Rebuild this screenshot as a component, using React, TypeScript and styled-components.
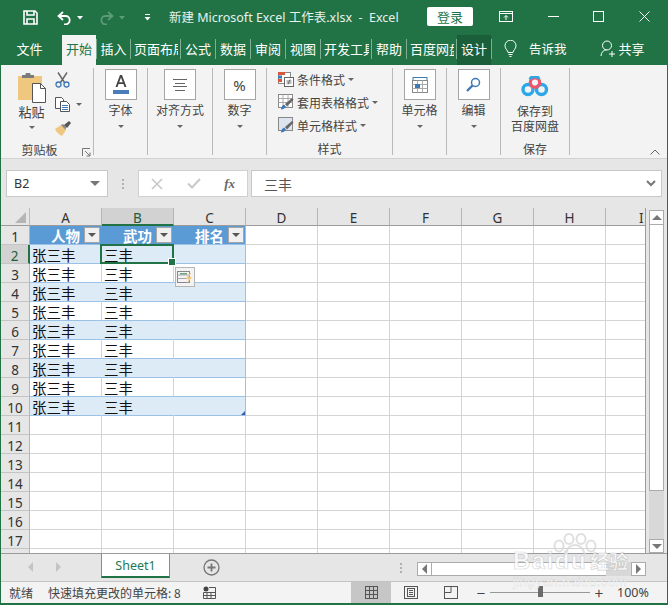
import React from 'react'
import styled, { createGlobalStyle } from 'styled-components'

const GREEN = '#217346'
const FONT = `"Noto Sans", "Noto Sans CJK SC", sans-serif`
const CJK = `"Noto Sans CJK SC", "Noto Sans", sans-serif`

const GlobalStyle = createGlobalStyle`
  html, body {
    margin: 0;
    padding: 0;
    background: #fff;
  }
  * {
    box-sizing: border-box;
  }
`

const Window = styled.div`
  position: relative;
  width: 668px;
  height: 605px;
  display: flex;
  flex-direction: column;
  overflow: hidden;
  background: #e6e6e6;
  border-left: 1px solid ${GREEN};
  border-right: 1px solid ${GREEN};
  border-bottom: 2px solid ${GREEN};
  font-family: ${CJK};
  color: #333;
`

const Spacer = styled.span<{ $w?: number; $h?: number }>`
  display: block;
  flex: none;
  width: ${(p) => p.$w ?? 0}px;
  height: ${(p) => p.$h ?? 0}px;
`

/* title bar */
const TitleBar = styled.div`
  height: 35px;
  flex: none;
  display: flex;
  align-items: center;
  padding-bottom: 2px;
  background: ${GREEN};
  color: #fff;
`

const QuickAccess = styled.div`
  width: 168px;
  flex: none;
  display: flex;
  align-items: center;
  gap: 5px;
  margin-top: 2px;
  padding-left: 22px;
`

const TitleText = styled.div`
  width: 258px;
  flex: none;
  font-family: ${FONT};
  font-size: 12.5px;
  white-space: pre;
  color: #e8f1ec;
`

const LoginButton = styled.div`
  width: 46px;
  height: 19px;
  flex: none;
  background: #fff;
  border-radius: 2px;
  color: ${GREEN};
  font-size: 13px;
  line-height: 19px;
  text-align: center;
`

const WindowButtons = styled.div`
  display: flex;
  align-items: center;
  margin-left: 26px;
  gap: 34.5px;
`

/* ribbon tabs */
const TabBar = styled.div`
  height: 30px;
  flex: none;
  display: flex;
  background: ${GREEN};
`

const Tab = styled.div<{ $w: number; $kind?: 'active' | 'dark' | 'plain' | 'file' }>`
  width: ${(p) => p.$w}px;
  flex: none;
  height: 30px;
  display: flex;
  align-items: center;
  justify-content: center;
  padding-bottom: 3px;
  padding-right: ${(p) => (p.$kind === 'file' ? 4 : 0)}px;
  overflow: hidden;
  white-space: nowrap;
  font-size: 13px;
  color: ${(p) => (p.$kind === 'active' ? GREEN : '#fff')};
  background: ${(p) => (p.$kind === 'active' ? '#f3f3f3' : p.$kind === 'dark' ? '#1b5e3a' : 'transparent')};
`

const TabClip = styled.div<{ $w: number }>`
  width: ${(p) => p.$w}px;
  flex: none;
  height: 30px;
  display: flex;
  align-items: center;
  padding: 0 0 3px 3px;
  overflow: hidden;
  clip-path: inset(0 2px 0 0);
  white-space: nowrap;
  font-size: 13px;
  color: #fff;
`

const TabSep = styled.div`
  width: 1px;
  flex: none;
  height: 20px;
  margin-top: 4px;
  background: #7fae95;
`

const TabExtra = styled.div<{ $ml: number; $gap: number; $size: number }>`
  display: flex;
  align-items: center;
  gap: ${(p) => p.$gap}px;
  margin-left: ${(p) => p.$ml}px;
  padding-bottom: 3px;
  font-size: ${(p) => p.$size}px;
  color: #fff;
  white-space: nowrap;
`

/* ribbon */
const Ribbon = styled.div`
  position: relative;
  height: 94px;
  flex: none;
  display: flex;
  background: #f3f3f3;
  border-bottom: 1px solid #d2d2d2;
  padding: 3px 0 3px;
`

const Group = styled.div<{ $w: number }>`
  width: ${(p) => p.$w}px;
  flex: none;
  display: flex;
  flex-direction: column;
  align-items: center;
  border-right: 1px solid #b9b9b9;
  font-size: 12px;
  color: #444;
`

const GroupBody = styled.div`
  flex: 1;
  display: flex;
  flex-direction: column;
  align-items: center;
  width: 100%;
`

const GroupLabel = styled.div<{ $pr?: number }>`
  height: 18px;
  padding-top: 3px;
  padding-right: ${(p) => p.$pr ?? 0}px;
  line-height: 17px;
  font-size: 12px;
  text-align: center;
  width: 100%;
  color: #444;
`

const IconBox = styled.div`
  width: 32px;
  height: 31px;
  margin-top: 1px;
  display: flex;
  align-items: center;
  justify-content: center;
  background: #fff;
  border: 1px solid #a5a5a5;
`

const PercentSign = styled.span`
  font-family: ${FONT};
  font-size: 15px;
  color: #444;
`

const BigLabel = styled.div`
  margin-top: 1px;
  line-height: 17px;
  font-size: 12px;
  white-space: nowrap;
`

const PasteLabel = styled.div`
  line-height: 17px;
  font-size: 13px;
  white-space: nowrap;
`

const SaveLabel = styled.div`
  margin-top: 5px;
  line-height: 15px;
  font-size: 12px;
  text-align: center;
  white-space: nowrap;
`

const Caret = styled.div<{ $mt?: number; $ml?: number }>`
  width: 0;
  height: 0;
  flex: none;
  margin-top: ${(p) => p.$mt ?? 0}px;
  margin-left: ${(p) => p.$ml ?? 0}px;
  border-left: 3px solid transparent;
  border-right: 3px solid transparent;
  border-top: 3px solid #666;
`

const ClipboardBody = styled.div`
  flex: 1;
  display: flex;
  width: 100%;
`

const PasteColumn = styled.div`
  width: 50px;
  display: flex;
  flex-direction: column;
  align-items: center;
  padding: 5px 0 0 11px;
`

const ClipTools = styled.div`
  display: flex;
  flex-direction: column;
  gap: 4px;
  padding: 2px 0 0 4px;
`

const ClipToolRow = styled.div`
  display: flex;
  align-items: center;
  height: 20px;
`

const LabelRow = styled.div`
  position: relative;
  width: 100%;
`

const Launcher = styled.svg`
  position: absolute;
  right: 2px;
  top: 10px;
`

const StyleList = styled.div`
  flex: 1;
  display: flex;
  flex-direction: column;
  width: 100%;
  padding: 1px 0 0 11px;
  gap: 3px;
`

const StyleRow = styled.div`
  display: flex;
  align-items: center;
  height: 20px;
  gap: 3px;
  font-size: 12px;
  white-space: nowrap;
`

const CollapseIcon = styled.svg`
  position: absolute;
  right: 7px;
  bottom: 3px;
`

/* formula bar */
const FormulaRow = styled.div`
  height: 49px;
  flex: none;
  display: flex;
  padding: 11px 5px 11px 5px;
`

const NameBox = styled.div`
  width: 102px;
  flex: none;
  display: flex;
  align-items: center;
  justify-content: space-between;
  padding: 0 7px;
  background: #fff;
  border: 1px solid #c8c8c8;
  font-family: ${FONT};
  font-size: 12.5px;
`

const FormulaDots = styled.div`
  width: 30px;
  flex: none;
  display: flex;
  flex-direction: column;
  align-items: center;
  justify-content: center;
  gap: 2px;
`

const Dot = styled.span`
  width: 2px;
  height: 2px;
  background: #b0b0b0;
`

const FormulaButtons = styled.div`
  width: 110px;
  flex: none;
  display: flex;
  align-items: center;
  justify-content: space-between;
  padding: 0 12px;
  background: #fff;
  border: 1px solid #d0d0d0;
`

const FxLabel = styled.span`
  font-family: "Liberation Serif", serif;
  font-style: italic;
  font-weight: 700;
  font-size: 13px;
  color: #666;
`

const FormulaInput = styled.div`
  flex: 1;
  margin-left: 3px;
  display: flex;
  align-items: center;
  justify-content: space-between;
  padding: 0 5px 0 12px;
  background: #fff;
  border: 1px solid #c8c8c8;
  font-size: 14px;
  color: #555;
`

/* sheet */
const SheetArea = styled.div`
  position: relative;
  height: 346px;
  flex: none;
  display: flex;
`

const Grid = styled.div`
  width: 645px;
  flex: none;
  display: grid;
  grid-template-columns: 29px repeat(8, 72px) 40px;
  grid-template-rows: 18px repeat(17, 19px) 5px;
  overflow: hidden;
  background: #fff;
  border-right: 1px solid #9b9b9b;
  border-bottom: 1px solid #9b9b9b;
`

const Corner = styled.div`
  position: relative;
  background: #e6e6e6;
  border-right: 1px solid #bcbcbc;
  border-bottom: 1px solid #9b9b9b;
`

const CornerMark = styled.div`
  position: absolute;
  right: 3px;
  bottom: 2px;
  width: 0;
  height: 0;
  border-left: 11px solid transparent;
  border-bottom: 11px solid #b5b5b5;
`

const ColHead = styled.div<{ $sel?: boolean; $last?: boolean }>`
  display: flex;
  align-items: center;
  justify-content: ${(p) => (p.$last ? 'flex-start' : 'center')};
  padding: 3px 0 0 ${(p) => (p.$last ? 33 : 0)}px;
  font-family: ${FONT};
  font-size: 13.5px;
  color: ${(p) => (p.$sel ? '#1e5d3b' : '#333')};
  background: ${(p) => (p.$sel ? '#d2d2d2' : '#e6e6e6')};
  border-right: ${(p) => (p.$last ? 'none' : '1px solid #b5b5b5')};
  border-bottom: ${(p) => (p.$sel ? `2px solid ${GREEN}` : '1px solid #9b9b9b')};
`

const RowHead = styled.div<{ $sel?: boolean }>`
  display: flex;
  align-items: center;
  justify-content: center;
  padding-top: 3px;
  font-family: ${FONT};
  font-size: 13.5px;
  line-height: 14px;
  color: ${(p) => (p.$sel ? '#1e5d3b' : '#333')};
  background: ${(p) => (p.$sel ? '#d2d2d2' : '#e6e6e6')};
  border-right: ${(p) => (p.$sel ? `2px solid ${GREEN}` : '1px solid #b5b5b5')};
  border-bottom: 1px solid #c4c4c4;
`

const Cell = styled.div<{ $zone?: 'head' | 'stripe' | 'plain'; $edge?: boolean }>`
  position: relative;
  display: flex;
  align-items: center;
  padding: 2px 0 0 2px;
  font-size: 14.5px;
  line-height: 16px;
  color: #111;
  white-space: nowrap;
  background: ${(p) => (p.$zone === 'head' ? '#5b9bd5' : p.$zone === 'stripe' ? '#ddebf7' : '#fff')};
  border-bottom: 1px solid ${(p) => (p.$zone ? '#9bc2e6' : '#d4d4d4')};
  border-right: 1px solid ${(p) =>
    p.$edge ? '#9bc2e6' : p.$zone === 'head' || p.$zone === 'stripe' ? 'transparent' : '#d4d4d4'};
`

const HeadText = styled.span`
  flex: 1;
  padding-right: 4px;
  text-align: right;
  color: #fff;
  font-weight: 700;
  font-size: 14.5px;
`

const FilterButton = styled.div`
  width: 16px;
  height: 16px;
  flex: none;
  margin: -2px 1px 0 0;
  display: flex;
  align-items: center;
  justify-content: center;
  background: #f0f0f0;
  border: 1px solid #a6a6a6;
`

const FilterCaret = styled.div`
  width: 0;
  height: 0;
  border-left: 4px solid transparent;
  border-right: 4px solid transparent;
  border-top: 4px solid #555;
`

const ActiveBorder = styled.div`
  position: absolute;
  inset: -1px -1px -1px -2px;
  border: 2px solid ${GREEN};
  pointer-events: none;
`

const FillHandle = styled.div`
  position: absolute;
  right: -4px;
  bottom: -4px;
  width: 6px;
  height: 6px;
  background: ${GREEN};
  border: 1px solid #fff;
  box-sizing: content-box;
  z-index: 2;
`

const SmartTag = styled.div`
  position: absolute;
  left: 174px;
  top: 59px;
  width: 20px;
  height: 20px;
  display: flex;
  align-items: center;
  justify-content: center;
  background: #f3f3f3;
  border: 1px solid #b5b5b5;
  z-index: 3;
`

const ResizeMark = styled.div`
  position: absolute;
  right: 0;
  bottom: 0;
  width: 0;
  height: 0;
  border-left: 4px solid transparent;
  border-bottom: 4px solid #2f5fa8;
`

const VScroll = styled.div`
  width: 21px;
  flex: none;
  display: flex;
  flex-direction: column;
  padding: 2px 3px 0 3px;
  border-bottom: 1px solid #9b9b9b;
`

const ScrollButton = styled.div<{ $h?: number }>`
  width: 15px;
  height: ${(p) => p.$h ?? 15}px;
  flex: none;
  display: flex;
  align-items: center;
  justify-content: center;
  background: #fff;
  border: 1px solid #ababab;
`

const VThumb = styled.div`
  width: 15px;
  height: 266px;
  flex: none;
  background: #fff;
  border: 1px solid #ababab;
  border-top: none;
`

const VTrack = styled.div`
  width: 15px;
  flex: 1;
  background: #d8d8d8;
`

/* sheet tabs */
const SheetTabs = styled.div`
  height: 28px;
  flex: none;
  display: flex;
  align-items: flex-start;
  background: #e6e6e6;
  border-bottom: 1px solid #c4c4c4;
`

const TabNav = styled.div`
  width: 100px;
  height: 22px;
  flex: none;
  display: flex;
  align-items: center;
  gap: 18px;
  padding: 3px 0 0 25px;
`

const SheetTab = styled.div`
  width: 69px;
  height: 24px;
  flex: none;
  display: flex;
  align-items: center;
  justify-content: center;
  background: #fff;
  border-left: 1px solid #8c8c8c;
  border-right: 1px solid #8c8c8c;
  border-bottom: 2px solid ${GREEN};
  font-family: ${FONT};
  font-size: 12.5px;
  color: #1d7a52;
`

const AddSheet = styled.svg`
  margin: 5px 0 0 33px;
  flex: none;
`

const TabDots = styled.div`
  margin: 9px 0 0 175px;
  display: flex;
  flex-direction: column;
  align-items: center;
  gap: 2px;
  width: 12px;
`

const HScroll = styled.div`
  display: flex;
  margin: 8px 0 0 10px;
  height: 14px;
  width: 229px;
  flex: none;
`

const HThumb = styled.div`
  width: 174px;
  flex: none;
  background: #fff;
  border-top: 1px solid #ababab;
  border-bottom: 1px solid #ababab;
`

const HTrack = styled.div`
  flex: 1;
  background: #d8d8d8;
`

/* status bar */
const StatusBar = styled.div`
  flex: 1;
  display: flex;
  align-items: center;
  background: #f3f3f3;
  font-size: 12px;
  color: #444;
`

const StatusText = styled.span<{ $w: number; $pl?: number }>`
  width: ${(p) => p.$w}px;
  padding-left: ${(p) => p.$pl ?? 0}px;
  flex: none;
  white-space: nowrap;
`

const ViewButton = styled.div<{ $on?: boolean }>`
  width: 40px;
  height: 100%;
  flex: none;
  display: flex;
  align-items: center;
  justify-content: center;
  background: ${(p) => (p.$on ? '#c6c6c6' : 'transparent')};
`

const ZoomSlider = styled.div`
  position: relative;
  width: 100px;
  height: 1px;
  flex: none;
  margin: 0 4px;
  background: #999;
`

const SliderKnob = styled.div`
  position: absolute;
  left: 48px;
  top: -6px;
  width: 5px;
  height: 11px;
  background: #6b6b6b;
`

const ZoomSign = styled.span`
  width: 10px;
  flex: none;
  font-size: 15px;
  line-height: 15px;
  color: #444;
  text-align: center;
`

const ZoomValue = styled.span`
  margin-left: 13px;
  font-family: ${FONT};
  font-size: 12.5px;
  white-space: nowrap;
`

/* watermark */
const Watermark = styled.div`
  position: absolute;
  left: 512px;
  top: 533px;
  width: 124px;
  height: 62px;
  display: flex;
  flex-direction: column;
  align-items: flex-start;
  color: rgba(255, 255, 255, 0.82);
  pointer-events: none;
  z-index: 5;
`

const WatermarkPaw = styled.svg`
  position: absolute;
  left: 38px;
  top: 0;
`

const WatermarkLine = styled.div`
  margin-top: 16px;
  display: flex;
  align-items: baseline;
  gap: 3px;
  font-family: "Liberation Sans", sans-serif;
  font-weight: 700;
  font-size: 24px;
  line-height: 24px;
  letter-spacing: 1.5px;
  -webkit-text-stroke: 0.6px rgba(170, 170, 170, 0.55);
`

const WatermarkCn = styled.span`
  font-family: ${CJK};
  font-size: 19px;
  letter-spacing: 0;
`

const WatermarkUrl = styled.div`
  margin-top: 2px;
  font-family: "Liberation Sans", sans-serif;
  font-size: 13.5px;
  line-height: 14px;
  letter-spacing: 0.3px;
  -webkit-text-stroke: 0.3px rgba(170, 170, 170, 0.5);
`

const SaveIcon = () => (
  <svg width="15" height="15" viewBox="0 0 15 15" fill="none" stroke="#fff" strokeWidth="1.6">
    <path d="M1 1h11l2 2v11H1z" />
    <path d="M4 1v4h7V1M4 14V9h7v5" />
  </svg>
)

const UndoPath = styled.svg<{ $flip?: boolean }>`
  transform: ${(p) => (p.$flip ? 'scaleX(-1)' : 'none')};
`

const UndoIcon = ({ muted, flip }: { muted?: boolean; flip?: boolean }) => (
  <UndoPath
    $flip={flip}
    width="15"
    height="14"
    viewBox="0 0 15 14"
    fill="none"
    stroke={muted ? '#5c9a78' : '#fff'}
    strokeWidth="1.8"
  >
    <path d="M6 1L1.5 5 6 9" />
    <path d="M2 5h6.5a4.2 4.2 0 0 1 0 8.4H7" />
  </UndoPath>
)

const TinyCaret = ({ color = '#fff' }: { color?: string }) => (
  <svg width="6" height="4" viewBox="0 0 6 4">
    <path d="M0 0h6L3 3.5z" fill={color} />
  </svg>
)

const CustomizeIcon = () => (
  <svg width="7" height="8" viewBox="0 0 7 8">
    <path d="M1 0.5h5" stroke="#fff" />
    <path d="M0.5 3h6L3.5 6.5z" fill="#fff" />
  </svg>
)

const RibbonDisplayIcon = () => (
  <svg width="14" height="11" viewBox="0 0 14 11" fill="none" stroke="#fff">
    <rect x="0.5" y="0.5" width="13" height="10" />
    <path d="M0.5 2.5h13M7 9V4.5M5 6.5l2-2 2 2" />
  </svg>
)

const MinIcon = () => (
  <svg width="11" height="11" viewBox="0 0 11 11" stroke="#fff">
    <path d="M0 5.5h11" />
  </svg>
)

const MaxIcon = () => (
  <svg width="11" height="11" viewBox="0 0 11 11" fill="none" stroke="#fff">
    <rect x="0.5" y="0.5" width="10" height="10" />
  </svg>
)

const CloseIcon = () => (
  <svg width="11" height="11" viewBox="0 0 11 11" stroke="#fff">
    <path d="M0.5 0.5l10 10M10.5 0.5l-10 10" />
  </svg>
)

const BulbIcon = () => (
  <svg width="13" height="18" viewBox="0 0 13 18" fill="none" stroke="#fff">
    <path d="M4 12.5c0-2-3-3.5-3-6.8a5.5 5.5 0 0 1 11 0c0 3.3-3 4.8-3 6.8z" />
    <path d="M4.5 14.5h4M5.5 16.5h2" />
  </svg>
)

const ShareIcon = () => (
  <svg width="15" height="17" viewBox="0 0 15 17" fill="none" stroke="#fff">
    <circle cx="7" cy="5.5" r="4.5" />
    <path d="M1 16c0-3.5 2.5-6 5.5-6.2M9 14h6M12 11v6" />
  </svg>
)

const PasteIcon = () => (
  <svg width="28" height="30" viewBox="0 0 28 30">
    <path d="M0 3h5v2h10V3h9v24H0z" fill="#f0c77f" />
    <rect x="4" y="2" width="12" height="3" fill="#7b7b7b" />
    <rect x="7.5" y="0" width="5" height="3" rx="1" fill="#7b7b7b" />
    <path d="M14.5 10.5h8l5 5v14h-13z" fill="#fff" stroke="#555" />
    <path d="M22.5 10.5v5h5" fill="none" stroke="#555" />
  </svg>
)

const ScissorsIcon = () => (
  <svg width="15" height="16" viewBox="0 0 15 16" fill="none">
    <path d="M3 0.5l6.5 10M12 0.5l-6.5 10" stroke="#666" strokeWidth="1.4" />
    <circle cx="3.5" cy="12.5" r="2.5" stroke="#3f78b4" strokeWidth="1.3" />
    <circle cx="11.5" cy="12.5" r="2.5" stroke="#3f78b4" strokeWidth="1.3" />
  </svg>
)

const CopyIcon = () => (
  <svg width="15" height="15" viewBox="0 0 15 15" fill="#fff" stroke="#555">
    <path d="M0.5 0.5h6l2 2v9h-8z" />
    <path d="M5.5 4.5h6l3 3v7h-9z" />
    <path d="M7 8.5h6M7 10.5h6M7 12.5h6" stroke="#3f78b4" />
  </svg>
)

const BrushIcon = () => (
  <svg width="16" height="15" viewBox="0 0 16 15">
    <path d="M0 8l6-4 5 5-4 6C5 14 1 11 0 8z" fill="#f0c77f" />
    <path d="M6 4l2-1 3 3-0.5 3z" fill="#888" />
    <path d="M9 4l5-4 2 2-4 5z" fill="#555" />
  </svg>
)

const LauncherIcon = () => (
  <Launcher width="9" height="9" viewBox="0 0 9 9" fill="none" stroke="#777">
    <path d="M0.5 8V0.5H8" />
    <path d="M3 3l5 5M8 4.5V8H4.5" />
  </Launcher>
)

const FontIcon = () => (
  <svg width="18" height="22" viewBox="0 0 18 22">
    <path d="M3.5 13L8 1h2l4.5 12h-2l-1.1-3H6.6l-1.1 3zM7.2 8.3h3.6L9 3.5z" fill="#444" />
    <rect x="1" y="16" width="16" height="4" fill="#4a7ebb" />
  </svg>
)

const AlignIcon = () => (
  <svg width="16" height="12" viewBox="0 0 16 12" stroke="#666">
    <path d="M1 0.5h14M3 4.5h10M1 7.5h14M3 11.5h10" />
  </svg>
)

const CellsIcon = () => (
  <svg width="16" height="16" viewBox="0 0 16 16" fill="none">
    <path d="M1 0.5h14M1 0V3M15 0V3" stroke="#3f78b4" />
    <rect x="0.5" y="3.5" width="15" height="12" fill="#fff" stroke="#888" />
    <path d="M0.5 7.5h15M0.5 11.5h15M5.5 3.5v12M10.5 3.5v12" stroke="#aaa" />
    <rect x="3" y="7" width="5" height="4" fill="#3f78b4" />
  </svg>
)

const SearchIcon = () => (
  <svg width="15" height="15" viewBox="0 0 15 15" fill="none">
    <circle cx="9.5" cy="5.5" r="4" stroke="#3f78b4" strokeWidth="1.5" />
    <path d="M6.5 8.5L1 14" stroke="#3f78b4" strokeWidth="2.4" />
  </svg>
)

const BaiduCloudIcon = () => (
  <svg width="28" height="22" viewBox="0 0 28 22" fill="none">
    <circle cx="7" cy="13.5" r="5" stroke="#2da7e8" strokeWidth="3.4" />
    <circle cx="20.5" cy="13.5" r="5" stroke="#2da7e8" strokeWidth="3.4" />
    <circle cx="14" cy="6.5" r="4.7" stroke="#f0566a" strokeWidth="3.2" />
    <path d="M9 3.5a5 5 0 0 1 9-0.5" stroke="#2da7e8" strokeWidth="3.2" />
  </svg>
)

const CondFormatIcon = () => (
  <svg width="16" height="15" viewBox="0 0 16 15" fill="none">
    <rect x="0.5" y="0.5" width="12" height="11" fill="#fff" stroke="#888" />
    <rect x="0" y="0" width="7" height="3" fill="#d9583b" />
    <rect x="0" y="3.5" width="4" height="3" fill="#3f78b4" />
    <rect x="0" y="7" width="4" height="3" fill="#d9583b" />
    <rect x="6.5" y="5.5" width="9" height="9" fill="#fff" stroke="#666" />
    <path d="M8.5 9h5M8.5 11h5M12 7.5l-2 5" stroke="#555" strokeWidth="0.8" />
  </svg>
)

const TableFormatIcon = ({ plain }: { plain?: boolean }) => (
  <svg width="16" height="16" viewBox="0 0 16 16" fill="none">
    <rect x="0.5" y="0.5" width="14" height="13" fill={plain ? '#dde4ee' : '#fff'} stroke="#888" />
    {!plain && <path d="M0.5 4.5h14M0.5 8.5h14M5 0.5v13M10 0.5v13" stroke="#aaa" />}
    <path d="M3 15.5c2 0 4-1 5-3l-2-2c-2 1-3 3-3 5z" fill="#3f78b4" />
    <path d="M7 10l7-6 1.5 1.5-6.5 7z" fill="#666" />
  </svg>
)

const CrossIcon = () => (
  <svg width="12" height="12" viewBox="0 0 12 12" stroke="#c8c8c8" strokeWidth="1.6">
    <path d="M1 1l10 10M11 1L1 11" />
  </svg>
)

const CheckIcon = () => (
  <svg width="14" height="11" viewBox="0 0 14 11" fill="none" stroke="#c8c8c8" strokeWidth="2">
    <path d="M1 5.5L5 9.5 13 1" />
  </svg>
)

const ChevronDown = () => (
  <svg width="10" height="7" viewBox="0 0 10 7" fill="none" stroke="#777" strokeWidth="2">
    <path d="M1 1l4 4 4-4" />
  </svg>
)

const SmartTagIcon = () => (
  <svg width="17" height="15" viewBox="0 0 17 15" fill="none">
    <rect x="0.5" y="1.5" width="12" height="11" stroke="#888" />
    <path d="M0.5 5h12M0.5 8.5h12" stroke="#aaa" />
    <rect x="3" y="3" width="7" height="1.5" fill="#6fa287" />
    <path d="M13 3l-4 6h2.5l-1.5 5 5-7h-3l2-4z" fill="#f0c77f" />
  </svg>
)

const MacroIcon = () => (
  <svg width="13" height="13" viewBox="0 0 13 13">
    <circle cx="3" cy="3" r="2.5" fill="#444" />
    <path d="M6 1.5h6.5v11H0.5V6.5h12M0.5 9.5h12M4 6.5v6M8 6.500v6" fill="none" stroke="#555" />
  </svg>
)

const NormalViewIcon = () => (
  <svg width="13" height="13" viewBox="0 0 13 13" fill="none" stroke="#555">
    <rect x="0.5" y="0.5" width="12" height="12" />
    <path d="M0.5 4.5h12M0.5 8.5h12M4.5 0.5v12M8.5 0.5v12" />
  </svg>
)

const PageViewIcon = () => (
  <svg width="14" height="13" viewBox="0 0 14 13" fill="none" stroke="#555">
    <rect x="0.5" y="0.5" width="13" height="12" />
    <rect x="3.5" y="2.5" width="7" height="8" />
    <path d="M5 4.5h4M5 6.5h4M5 8.5h4" />
  </svg>
)

const BreakViewIcon = () => (
  <svg width="14" height="13" viewBox="0 0 14 13" fill="none" stroke="#555">
    <rect x="0.5" y="0.5" width="13" height="12" />
    <path d="M0.5 6.5h6.5v-6" />
  </svg>
)

const Arrow = ({ dir, color = '#777' }: { dir: 'up' | 'down' | 'left' | 'right'; color?: string }) => {
  const d = {
    up: 'M0 6L5 1l5 5z',
    down: 'M0 1h10L5 6z',
    left: 'M7 0v10L2 5z',
    right: 'M2 0v10L7 5z',
  }[dir]
  const vertical = dir === 'up' || dir === 'down'
  return (
    <svg width="10" height={vertical ? 7 : 10} viewBox={vertical ? '0 0 10 7' : '0 0 10 10'}>
      <path d={d} fill={color} />
    </svg>
  )
}

const AddIcon = () => (
  <AddSheet width="17" height="17" viewBox="0 0 17 17" fill="none" stroke="#777">
    <circle cx="8.5" cy="8.5" r="7.5" strokeWidth="1.3" />
    <path d="M4.5 8.5h8M8.5 4.5v8" strokeWidth="1.8" />
  </AddSheet>
)

const PawIcon = () => (
  <WatermarkPaw width="48" height="22" viewBox="0 0 48 22" fill="none" stroke="rgba(215,215,215,0.8)" strokeWidth="2">
    <ellipse cx="8" cy="13" rx="4.5" ry="5.5" />
    <ellipse cx="18" cy="6" rx="4.5" ry="5" />
    <ellipse cx="30" cy="6" rx="4.5" ry="5" />
    <ellipse cx="40" cy="13" rx="4.5" ry="5.5" />
    <path d="M24 12c-5 0-9 4-10 10M24 12c5 0 9 4 10 10" />
  </WatermarkPaw>
)

const COLUMNS = ['A', 'B', 'C', 'D', 'E', 'F', 'G', 'H', 'I']
const ROWS = Array.from({ length: 18 }, (_, i) => i + 1)
const HEADERS = ['人物', '武功', '排名']

const tabs: Array<[string, number, 'active' | 'dark' | 'plain' | 'clip']> = [
  ['开始', 34, 'active'],
  ['插入', 33, 'plain'],
  ['页面布局', 49, 'clip'],
  ['公式', 34, 'plain'],
  ['数据', 34, 'plain'],
  ['审阅', 34, 'plain'],
  ['视图', 34, 'plain'],
  ['开发工具', 50, 'clip'],
  ['帮助', 34, 'plain'],
  ['百度网盘', 49, 'clip'],
  ['设计', 34, 'dark'],
]

const SheetCell = ({ row, col }: { row: number; col: number }) => {
  const inTable = col < 3 && row <= 10
  const zone = !inTable ? undefined : row === 1 ? 'head' : row % 2 === 0 ? 'stripe' : 'plain'
  const active = row === 2 && col === 1

  return (
    <Cell $zone={zone} $edge={inTable && col === 2}>
      {row === 1 && col < 3 && (
        <>
          <HeadText>{HEADERS[col]}</HeadText>
          <FilterButton>
            <FilterCaret />
          </FilterButton>
        </>
      )}
      {row > 1 && row <= 10 && col === 0 && '张三丰'}
      {row > 1 && row <= 10 && col === 1 && '三丰'}
      {active && (
        <ActiveBorder>
          <FillHandle />
        </ActiveBorder>
      )}
      {row === 10 && col === 2 && <ResizeMark />}
    </Cell>
  )
}

export default function App() {
  return (
    <>
      <GlobalStyle />
      <Window>
        <TitleBar>
          <QuickAccess>
            <SaveIcon />
            <Spacer $w={9} />
            <UndoIcon />
            <TinyCaret />
            <Spacer $w={6} />
            <UndoIcon muted flip />
            <TinyCaret color="#5c9a78" />
            <Spacer $w={9} />
            <CustomizeIcon />
          </QuickAccess>
          <TitleText>{'新建 Microsoft Excel 工作表.xlsx  -  Excel'}</TitleText>
          <LoginButton>登录</LoginButton>
          <WindowButtons>
            <RibbonDisplayIcon />
            <MinIcon />
            <MaxIcon />
            <CloseIcon />
          </WindowButtons>
        </TitleBar>

        <TabBar>
          <Tab $w={61} $kind="file">
            文件
          </Tab>
          {tabs.map(([label, w, kind]) => (
            <React.Fragment key={label}>
              {kind === 'clip' ? (
                <TabClip $w={w}>{label}</TabClip>
              ) : (
                <Tab $w={w} $kind={kind}>
                  {label}
                </Tab>
              )}
              <TabSep />
            </React.Fragment>
          ))}
          <TabExtra $ml={12} $gap={12} $size={12.5}>
            <BulbIcon />
            告诉我
          </TabExtra>
          <TabExtra $ml={33} $gap={4} $size={13}>
            <ShareIcon />
            共享
          </TabExtra>
        </TabBar>

        <Ribbon>
          <Group $w={93}>
            <ClipboardBody>
              <PasteColumn>
                <PasteIcon />
                <PasteLabel>粘贴</PasteLabel>
                <Caret $mt={6} />
              </PasteColumn>
              <ClipTools>
                <ClipToolRow>
                  <ScissorsIcon />
                </ClipToolRow>
                <ClipToolRow>
                  <CopyIcon />
                  <Caret $ml={6} />
                </ClipToolRow>
                <ClipToolRow>
                  <BrushIcon />
                </ClipToolRow>
              </ClipTools>
            </ClipboardBody>
            <LabelRow>
              <GroupLabel $pr={15}>剪贴板</GroupLabel>
              <LauncherIcon />
            </LabelRow>
          </Group>

          <Group $w={54}>
            <GroupBody>
              <IconBox>
                <FontIcon />
              </IconBox>
              <BigLabel>字体</BigLabel>
              <Caret $mt={7} />
            </GroupBody>
          </Group>

          <Group $w={65}>
            <GroupBody>
              <IconBox>
                <AlignIcon />
              </IconBox>
              <BigLabel>对齐方式</BigLabel>
              <Caret $mt={7} />
            </GroupBody>
          </Group>

          <Group $w={54}>
            <GroupBody>
              <IconBox>
                <PercentSign>%</PercentSign>
              </IconBox>
              <BigLabel>数字</BigLabel>
              <Caret $mt={7} />
            </GroupBody>
          </Group>

          <Group $w={126}>
            <StyleList>
              <StyleRow>
                <CondFormatIcon />
                条件格式
                <Caret />
              </StyleRow>
              <StyleRow>
                <TableFormatIcon />
                套用表格格式
                <Caret />
              </StyleRow>
              <StyleRow>
                <TableFormatIcon plain />
                单元格样式
                <Caret />
              </StyleRow>
            </StyleList>
            <GroupLabel>样式</GroupLabel>
          </Group>

          <Group $w={54}>
            <GroupBody>
              <IconBox>
                <CellsIcon />
              </IconBox>
              <BigLabel>单元格</BigLabel>
              <Caret $mt={7} />
            </GroupBody>
          </Group>

          <Group $w={54}>
            <GroupBody>
              <IconBox>
                <SearchIcon />
              </IconBox>
              <BigLabel>编辑</BigLabel>
              <Caret $mt={7} />
            </GroupBody>
          </Group>

          <Group $w={69}>
            <GroupBody>
              <Spacer $h={8} />
              <BaiduCloudIcon />
              <SaveLabel>
                保存到
                <br />
                百度网盘
              </SaveLabel>
            </GroupBody>
            <GroupLabel>保存</GroupLabel>
          </Group>

          <CollapseIcon width="10" height="6" viewBox="0 0 10 6" fill="none" stroke="#666">
            <path d="M0.5 5.5L5 1l4.5 4.5" />
          </CollapseIcon>
        </Ribbon>

        <FormulaRow>
          <NameBox>
            B2
            <Arrow dir="down" />
          </NameBox>
          <FormulaDots>
            <Dot />
            <Dot />
            <Dot />
          </FormulaDots>
          <FormulaButtons>
            <CrossIcon />
            <CheckIcon />
            <FxLabel>fx</FxLabel>
          </FormulaButtons>
          <FormulaInput>
            三丰
            <ChevronDown />
          </FormulaInput>
        </FormulaRow>

        <SheetArea>
          <Grid>
            <Corner>
              <CornerMark />
            </Corner>
            {COLUMNS.map((c) => (
              <ColHead key={c} $sel={c === 'B'} $last={c === 'I'}>
                {c}
              </ColHead>
            ))}
            {ROWS.map((row) => (
              <React.Fragment key={row}>
                <RowHead $sel={row === 2}>{row < 18 ? row : ''}</RowHead>
                {COLUMNS.map((c, col) => (
                  <SheetCell key={c} row={row} col={col} />
                ))}
              </React.Fragment>
            ))}
          </Grid>
          <VScroll>
            <ScrollButton>
              <Arrow dir="up" />
            </ScrollButton>
            <VThumb />
            <VTrack />
            <ScrollButton $h={14}>
              <Arrow dir="down" />
            </ScrollButton>
          </VScroll>
          <SmartTag>
            <SmartTagIcon />
          </SmartTag>
        </SheetArea>

        <SheetTabs>
          <TabNav>
            <Arrow dir="left" color="#c4c4c4" />
            <Arrow dir="right" color="#c4c4c4" />
          </TabNav>
          <SheetTab>Sheet1</SheetTab>
          <AddIcon />
          <TabDots>
            <Dot />
            <Dot />
            <Dot />
          </TabDots>
          <HScroll>
            <ScrollButton $h={14}>
              <Arrow dir="left" />
            </ScrollButton>
            <HThumb />
            <HTrack />
            <ScrollButton $h={14}>
              <Arrow dir="right" />
            </ScrollButton>
          </HScroll>
        </SheetTabs>

        <StatusBar>
          <StatusText $w={47} $pl={8}>
            就绪
          </StatusText>
          <StatusText $w={155}>快速填充更改的单元格: 8</StatusText>
          <MacroIcon />
          <Spacer $w={135} />
          <ViewButton $on>
            <NormalViewIcon />
          </ViewButton>
          <ViewButton>
            <PageViewIcon />
          </ViewButton>
          <ViewButton>
            <BreakViewIcon />
          </ViewButton>
          <Spacer $w={5} />
          <ZoomSign>−</ZoomSign>
          <ZoomSlider>
            <SliderKnob />
          </ZoomSlider>
          <ZoomSign>+</ZoomSign>
          <ZoomValue>100%</ZoomValue>
        </StatusBar>

        <Watermark>
          <PawIcon />
          <WatermarkLine>
            Baidu<WatermarkCn>经验</WatermarkCn>
          </WatermarkLine>
          <WatermarkUrl>jingyan.baidu.com</WatermarkUrl>
        </Watermark>
      </Window>
    </>
  )
}
